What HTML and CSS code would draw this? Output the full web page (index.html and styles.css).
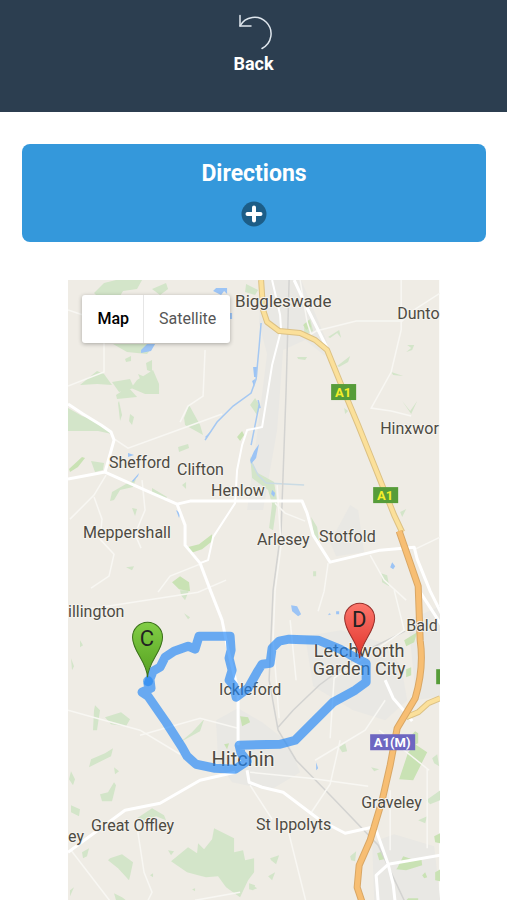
FILE: index.html
```
<!DOCTYPE html>
<html lang="en">
<head>
    <meta charset="UTF-8">
    <meta name="viewport" content="width=device-width, initial-scale=1.0">
    <title>Route</title>
    <link rel="stylesheet" href="styles.css">
</head>
<body>

    <header class="top-bar">
        <a class="back" href="#">
            <svg class="back-icon" width="38" height="38" viewBox="0 0 38 38" fill="none" stroke="#dfe6ed" stroke-width="1.500" stroke-linecap="round" stroke-linejoin="round">
                <path d="M5 1.500v10.500h11"/>
                <path d="M5 12A16.500 16.500 0 1 1 27 34.500"/>
            </svg>
            <span>Back</span>
        </a>
    </header>

    <main class="content">
        <button class="directions" type="button">
            <span>Directions</span>
            <svg width="26" height="26" viewBox="0 0 26 26">
                <circle cx="13" cy="13" r="12.500" fill="#1c5d87"/>
                <path d="M13 6.500v13M6.500 13h13" stroke="#fff" stroke-width="4" stroke-linecap="round"/>
            </svg>
        </button>

        <div class="map">
            <svg class="map-canvas" viewBox="68 280 371 620" role="img" aria-label="Route map around Hitchin and Letchworth">
                <rect x="68" y="280" width="371" height="620" fill="#efece5"/>

                <!-- towns -->
                <g fill="#e9e8e4">
                    <path d="M261 280h40l26 62-2 14-20-16-22 10-6 80-14 80h-16l10-76 10-80-8-30z"/>
                    <path d="M305 636l36-6 40 12 20 24 6 34-22 20-32-10-40-24z"/>
                    <path d="M216 720l22-12 24 14 26 20 12 30-30 18-38-8-14-20z"/>
                    <path d="M216 724l18-14 16 10-6 22-22 2z"/>
                    <path d="M350 505l8 5 6 42-28 4-6-14z"/>
                    <path d="M372 842l22-8 40 12 6 54h-66z"/>
                    <path d="M408 620l32-14v90l-24 4z"/>
                </g>

                <!-- woods and parks -->
                <g fill="#d3e5c9">
                    <path d="M104 283l12-3h26l-5 9-14 2-6 10-14 1-9-9zM152 289l14-6 2 6-8 6zM113 344h42l-8 10-20-2z"/>
                    <path d="M80 385l17-14 7 3 8 11-15-1zM112 382l18-3 4 9-15 4zM137 380l16-10 6 14v10h-14l-14-6zM116 395l12-8 9 10-20 2zM125 359l6-3v5l-5 1zM146 363l6-3v12l-5-2zM138 374l7 3-4 4z"/>
                    <path d="M68 408l14 8 12 4 10 8 8 6-14-3H68zM119 401l3 14-2 6-2-18zM130 414l4 3-2 8-3-4zM184 418l5-13 11 20 3 10-18-10z"/>
                    <path d="M91 461l13 2-1 7-8 2zM112 492l14-8 10-5-3 8-13 3-6 10-4 1zM152 488l15 9-3 3-12-6zM178 447l10-3 1 4-10 4zM182 485l4-3v7zM132 508l5 1-2 7zM126 567l8-1-2 4z"/>
                    <path d="M246 284l12 6-3 5-10-3zM304 324l6-5 3 12-9 4zM328 337l11-7 2 8-4-5-7 5zM337 366l13-10-2 6-9 5zM297 357h10l-2 3-7-1zM250 405l5-7 5 8-3 9zM407 345l4 3-5 4 6-2 2-5zM391 372l12 4-10-1zM402 401l8 10 7-10-6 13zM344 408l4 3-3 3z"/>
                    <path d="M250 456l6 16 18 10 3 20-4 28-4-2 3-24-4-14-16-12zM311 517l6 10 2 14-5-5zM381 573l6 2 2 11-7-4zM400 512l6-3-4 8zM313 571h3v5h-3z"/>
                    <path d="M180 590h9l-4 10-4-5zM105 717l16-5 9 7-4 7-15-2zM95 705l5 5-3 20h-4l1-20zM184 613l6 4-2 2zM204 719l-4 12-20 11 12-10zM80 640l3 5-3 2zM71 658l3 8-2 4z"/>
                    <path d="M91 759l14-6 8-5-2 8-10 5-12 6zM71 771l4 8-2 6-4-6zM100 794l8-2 6-10 2 3-4 16-10 0zM71 805l9 4-1 7-8-4zM137 818l15-10 12 7 2 5-10-4-15 5zM114 767l5 4-4 3z"/>
                    <path d="M171 861l17-14 9 6 1-10 6 6 8-10 2-11 20 10v14l9-2 2 10 9-2v14l-6 8-8 17-14-10-8-11-12 1-8-2-11-3z"/>
                    <path d="M110 858l12-4 11 8-3 14-1 4-11-12-10-8zM82 852l7-4-2 8-4 2zM168 850l6 1-3 4zM114 893l8 4 4 3h-10zM70 890l4-3-4 9zM150 875l3-2v4zM192 889l3-1v3zM249 883l6 2-2 5-4-1z"/>
                    <path d="M426 800l14-10v10l-10 4zM339 747l6-4 2 8-5 1zM371 767l8 2-5 2zM432 758l5-4 2 12-5-3zM418 820l9-4-2 7zM350 856l6-5-1 10-4-1zM270 858l9-3-3 9-5-4zM268 876l7-4-3 8zM251 884l6 4-5 2z"/>
                </g>
                <g fill="#c9e2b4">
                    <path d="M69 469l13-12 3 1-7 9-8 5zM237 437l5-6 2 4-4 6zM187 547l12-3 13-10v7l-10 8-12 4zM172 582l8-6 9 6 1 9-11-2zM303 325l6-5 2 7-5 3zM240 716l8 1 2 5-8 4zM404 640l13-8-3 10-8 4z"/>
                    <path d="M408 752l7-8 12 8-14 28-14-1zM397 868l6-12 12 4 6-3 1 8-16 5-10-1zM377 853l6-2 1 8-5 1zM406 669l5-2v8l-5 2zM434 836l6-3v10l-5-1zM435 872l5-3v12l-5-1zM422 875l3-3 2 5-3 1zM412 734l3-3 3 2v10l-5 2zM408 898h10v2h-12zM224 744l5-1-2 6z"/>
                </g>

                <!-- water -->
                <g fill="#9cc4f5">
                    <path d="M141 350l6-6h8l-4 7-10 2zM228 313h4v6h-4zM213 291l3-3h11v6l-3-3-3 4-4-2zM253 367h4v10h-3zM252 381l3-2-1 8zM132 481l7-8-1 3-5 6zM176 510l4 3-1 5zM128 453l6 2-6 2zM205 437l7-7-6 8z"/>
                    <path d="M250 460l4-9 5-7-3 14-5 6zM272 490l3 3-1 4-3-3zM291 605l6 1 4 8-3 2-6-5zM392 562l3 4-2 3-3-2zM329 613l2 1-3 1zM316 762l2 6-2 2zM336 611h3v3h-3z"/>
                </g>
                <g fill="none" stroke="#a5c8f2" stroke-width="1.500">
                    <path d="M205 440l12-18 16-16 18-13 5-14 3-32 2-24M258 400l2 8M251 445l8-40"/>
                    <path d="M252 463l6 12 8 8 38 2" stroke="#cadbe4"/>
                </g>

                <!-- railway -->
                <g fill="none" stroke="#d3d3d1" stroke-width="1.500">
                    <path d="M289 280l-3 110-5 140-8 60-4 90 9 50 18 30 38 39 44 46 26 55"/>
                    <path d="M278 727l15-17 26-25 46-34 40-20"/>
                </g>

                <!-- minor roads -->
                <g fill="none" stroke="#f8f7f3" stroke-width="1.500">
                    <path d="M68 310l36 12v50l-36 14M205 350l-2 46-15 10-8 16M113 438l15 10 50-18 44-16M106 475l-12 20-24 24M94 497l8 22-2 20 14 15-5 22-18 12M142 480l3 30-10 24 6 14M200 564l-30 12-12 16M300 280l7 42 4 12 5-3 40-10h46l10-10 28-18M401 280v50l-10 42-20 36 20 3 20 5"/>
                    <path d="M68 612l130-20 28-12M68 710l72 20 40 24M71 850l40 52M136 820l8 52 8 20-4 8M195 900l45-8M277 485l4 60-6 45-2 50 6 78M340 740l-10 44-20 30M250 772l60 6 58 8M250 785l22 34M288 830l18 72M370 555l14 25 22 20M290 620l6 60M394 590l10 40-70 48-4 60M440 537l-25 12M315 760l50-30 20-30"/>
                    <path d="M140 735l60-17 38 10M275 503l10 10 20 8M328 563l-4 28-6 20M379 730l50 40M390 790v60M427 768v80"/>
                </g>

                <!-- main roads -->
                <g fill="none" stroke="#fff" stroke-width="3" stroke-linejoin="round">
                    <path d="M68 404l15 10 18 11 10 7 3 8-9 32"/>
                    <path d="M68 479l37-7 40 18 32 14 13-3h112l5 12 6 22 17 27 50-12 34-3 3 12 13 32 12 24"/>
                    <path d="M177 504l8 21v20l15 18 11 29 11 28 6 30 10 40v55"/>
                    <path d="M200 563l8-3 5-23 22-34 2-33 5-25 5-15 15-3 10-62 9-35-1-15-8-35" stroke-width="2"/>
                    <path d="M68 852l57-42 35-7 40-23 35-8"/>
                    <path d="M247 770l2 12 13 5 21 5 37 28 25 13 27-6"/>
                    <path d="M376 830l12 34 5 20 2 18M440 855l-52 9-12 11 2 26M385 680l8 18 13 15 6 8M294 280l14 30 19 38M420 592l22 34"/>
                </g>

                <!-- trunk roads -->
                <g fill="none" stroke-linejoin="round">
                    <path d="M406 717l12-5 10-9 12-5M261 280l2 30 4 12 12 9 21 2 15 7 12 10 13 32 18 43 24 60 12 30 8 17" stroke="#dcc184" stroke-width="6"/>
                    <path d="M406 717l12-5 10-9 12-5M261 280l2 30 4 12 12 9 21 2 15 7 12 10 13 32 18 43 24 60 12 30 8 17" stroke="#fbe09a" stroke-width="4"/>
                    <path d="M399 531l19 55 2 54q4 28-5 58l-18 30-7 37-8 35-12 40-11 25-2 22 5 15" stroke="#d9a765" stroke-width="7"/>
                    <path d="M399 531l19 55 2 54q4 28-5 58l-18 30-7 37-8 35-12 40-11 25-2 22 5 15" stroke="#f7be73" stroke-width="5"/>
                </g>

                <!-- road numbers -->
                <g class="road-sign">
                    <rect x="331" y="384" width="25" height="16" fill="#569c39"/>
                    <rect x="373" y="487" width="25" height="16" fill="#569c39"/>
                    <rect x="370" y="734" width="45" height="16" fill="#6d66c1"/>
                    <rect x="436" y="669" width="4" height="15" fill="#569c39"/>
                    <text x="343" y="397" fill="#f4ee29">A1</text>
                    <text x="385" y="500" fill="#f4ee29">A1</text>
                    <text x="392" y="747" fill="#fff">A1(M)</text>
                </g>

                <g class="place">
                    <text x="235" y="307" class="large">Biggleswade</text>
                    <text x="397" y="319">Dunto</text>
                    <text x="380" y="434">Hinxwor</text>
                    <text x="109" y="468">Shefford</text>
                    <text x="177" y="475">Clifton</text>
                    <text x="211" y="496">Henlow</text>
                    <text x="83" y="538">Meppershall</text>
                    <text x="257" y="545">Arlesey</text>
                    <text x="319" y="542">Stotfold</text>
                    <text x="68" y="617">illington</text>
                    <text x="406" y="631">Bald</text>
                    <text x="359" y="657" class="town">Letchworth</text>
                    <text x="359" y="675" class="town">Garden City</text>
                    <text x="219" y="695">Ickleford</text>
                    <text x="243" y="766" class="city">Hitchin</text>
                    <text x="361" y="808">Graveley</text>
                    <text x="91" y="831">Great Offley</text>
                    <text x="256" y="830">St Ippolyts</text>
                    <text x="68" y="842">ey</text>
                </g>

                <!-- route -->
                <path class="route" d="M148 684L153 671 160 667 165 657 174 651 188 646 195 649 199 636 230 636 231 650 229 658 232 670 229 680 234 686 236 697 248 688 257 672 262 664 270 663 272 648 279 641 289 639 318 640 340 649 358 659 366 663 366 682 355 690 333 702 315 720 295 740 280 744 239 745 241 753 247 761 235 769 215 768 196 764 187 756 182 747 166 722 148 696 142 692 151 688 150 680"/>
                <circle cx="148" cy="681" r="5" fill="#1f86f2" opacity=".6"/>

                <!-- markers -->
                <g class="pin">
                    <path d="M147.500 677c-1-16-15-26-15-40a15 15 0 0 1 30 0c0 14-14 24-15 40z" fill="url(#green)" stroke="#3b701b"/>
                    <text x="147" y="646">C</text>
                    <path d="M359.500 658c-1-16-15-26-15-40a15 15 0 0 1 30 0c0 14-14 24-15 40z" fill="url(#red)" stroke="#96302b"/>
                    <text x="359" y="627">D</text>
                </g>
                <defs>
                    <linearGradient id="green" x2="0" y2="1">
                        <stop stop-color="#82ce46"/>
                        <stop offset="1" stop-color="#55a01f"/>
                    </linearGradient>
                    <linearGradient id="red" x2="0" y2="1">
                        <stop stop-color="#fc766b"/>
                        <stop offset="1" stop-color="#e0332b"/>
                    </linearGradient>
                </defs>
            </svg>

            <div class="map-type">
                <button class="active" type="button">Map</button>
                <button type="button">Satellite</button>
            </div>
        </div>
    </main>

</body>
</html>
```
FILE: styles.css
```
* {
    box-sizing: border-box;
}
body {
    margin: 0;
    background: #fff;
    font-family: Roboto, "Liberation Sans", sans-serif;
}
button {
    border: none;
    font-family: inherit;
    cursor: pointer;
}

.top-bar {
    display: flex;
    justify-content: center;
    padding: 14px 0 36px;
    background: #2c3e50;
}
.back {
    display: flex;
    flex-direction: column;
    align-items: center;
    color: #fff;
    font-size: 18px;
    font-weight: bold;
    line-height: 24px;
    text-decoration: none;
}
.back-icon {
    display: block;
}

.content {
    padding: 32px 21px 0 22px;
}
.directions {
    display: flex;
    flex-direction: column;
    align-items: center;
    gap: 13px;
    width: 100%;
    padding: 16px 0 15px;
    border-radius: 8px;
    background: #3498db;
    color: #fff;
    font-size: 23px;
    font-weight: bold;
    line-height: 28px;
}

.map {
    position: relative;
    width: 80%;
    margin: 38px auto 0;
}
.map-canvas {
    display: block;
    width: 100%;
}
.map-type {
    position: absolute;
    top: 15px;
    left: 14px;
    display: flex;
    border-radius: 3px;
    background: #fff;
    box-shadow: 0 1px 4px rgba(0, 0, 0, 0.3);
}
.map-type button {
    padding: 12px 14px 12px 15px;
    background: none;
    color: #565656;
    font-size: 16px;
    line-height: 24px;
}
.map-type .active {
    border-right: 1px solid #e6e6e6;
    color: #000;
    font-weight: 500;
}

.place {
    fill: #4d4a42;
    stroke: #f5f3ee;
    stroke-width: 2px;
    stroke-linejoin: round;
    paint-order: stroke;
    font-size: 16px;
}
.large {
    font-size: 17px;
}
.town {
    font-size: 18px;
    text-anchor: middle;
}
.city {
    font-size: 20px;
    text-anchor: middle;
}
.road-sign {
    font-size: 13px;
    font-weight: bold;
    text-anchor: middle;
}
.route {
    fill: none;
    stroke: #1f86f8;
    stroke-width: 9px;
    stroke-linecap: round;
    stroke-linejoin: round;
    opacity: 0.65;
}
.pin text {
    fill: #222;
    font-size: 22px;
    text-anchor: middle;
}
```
